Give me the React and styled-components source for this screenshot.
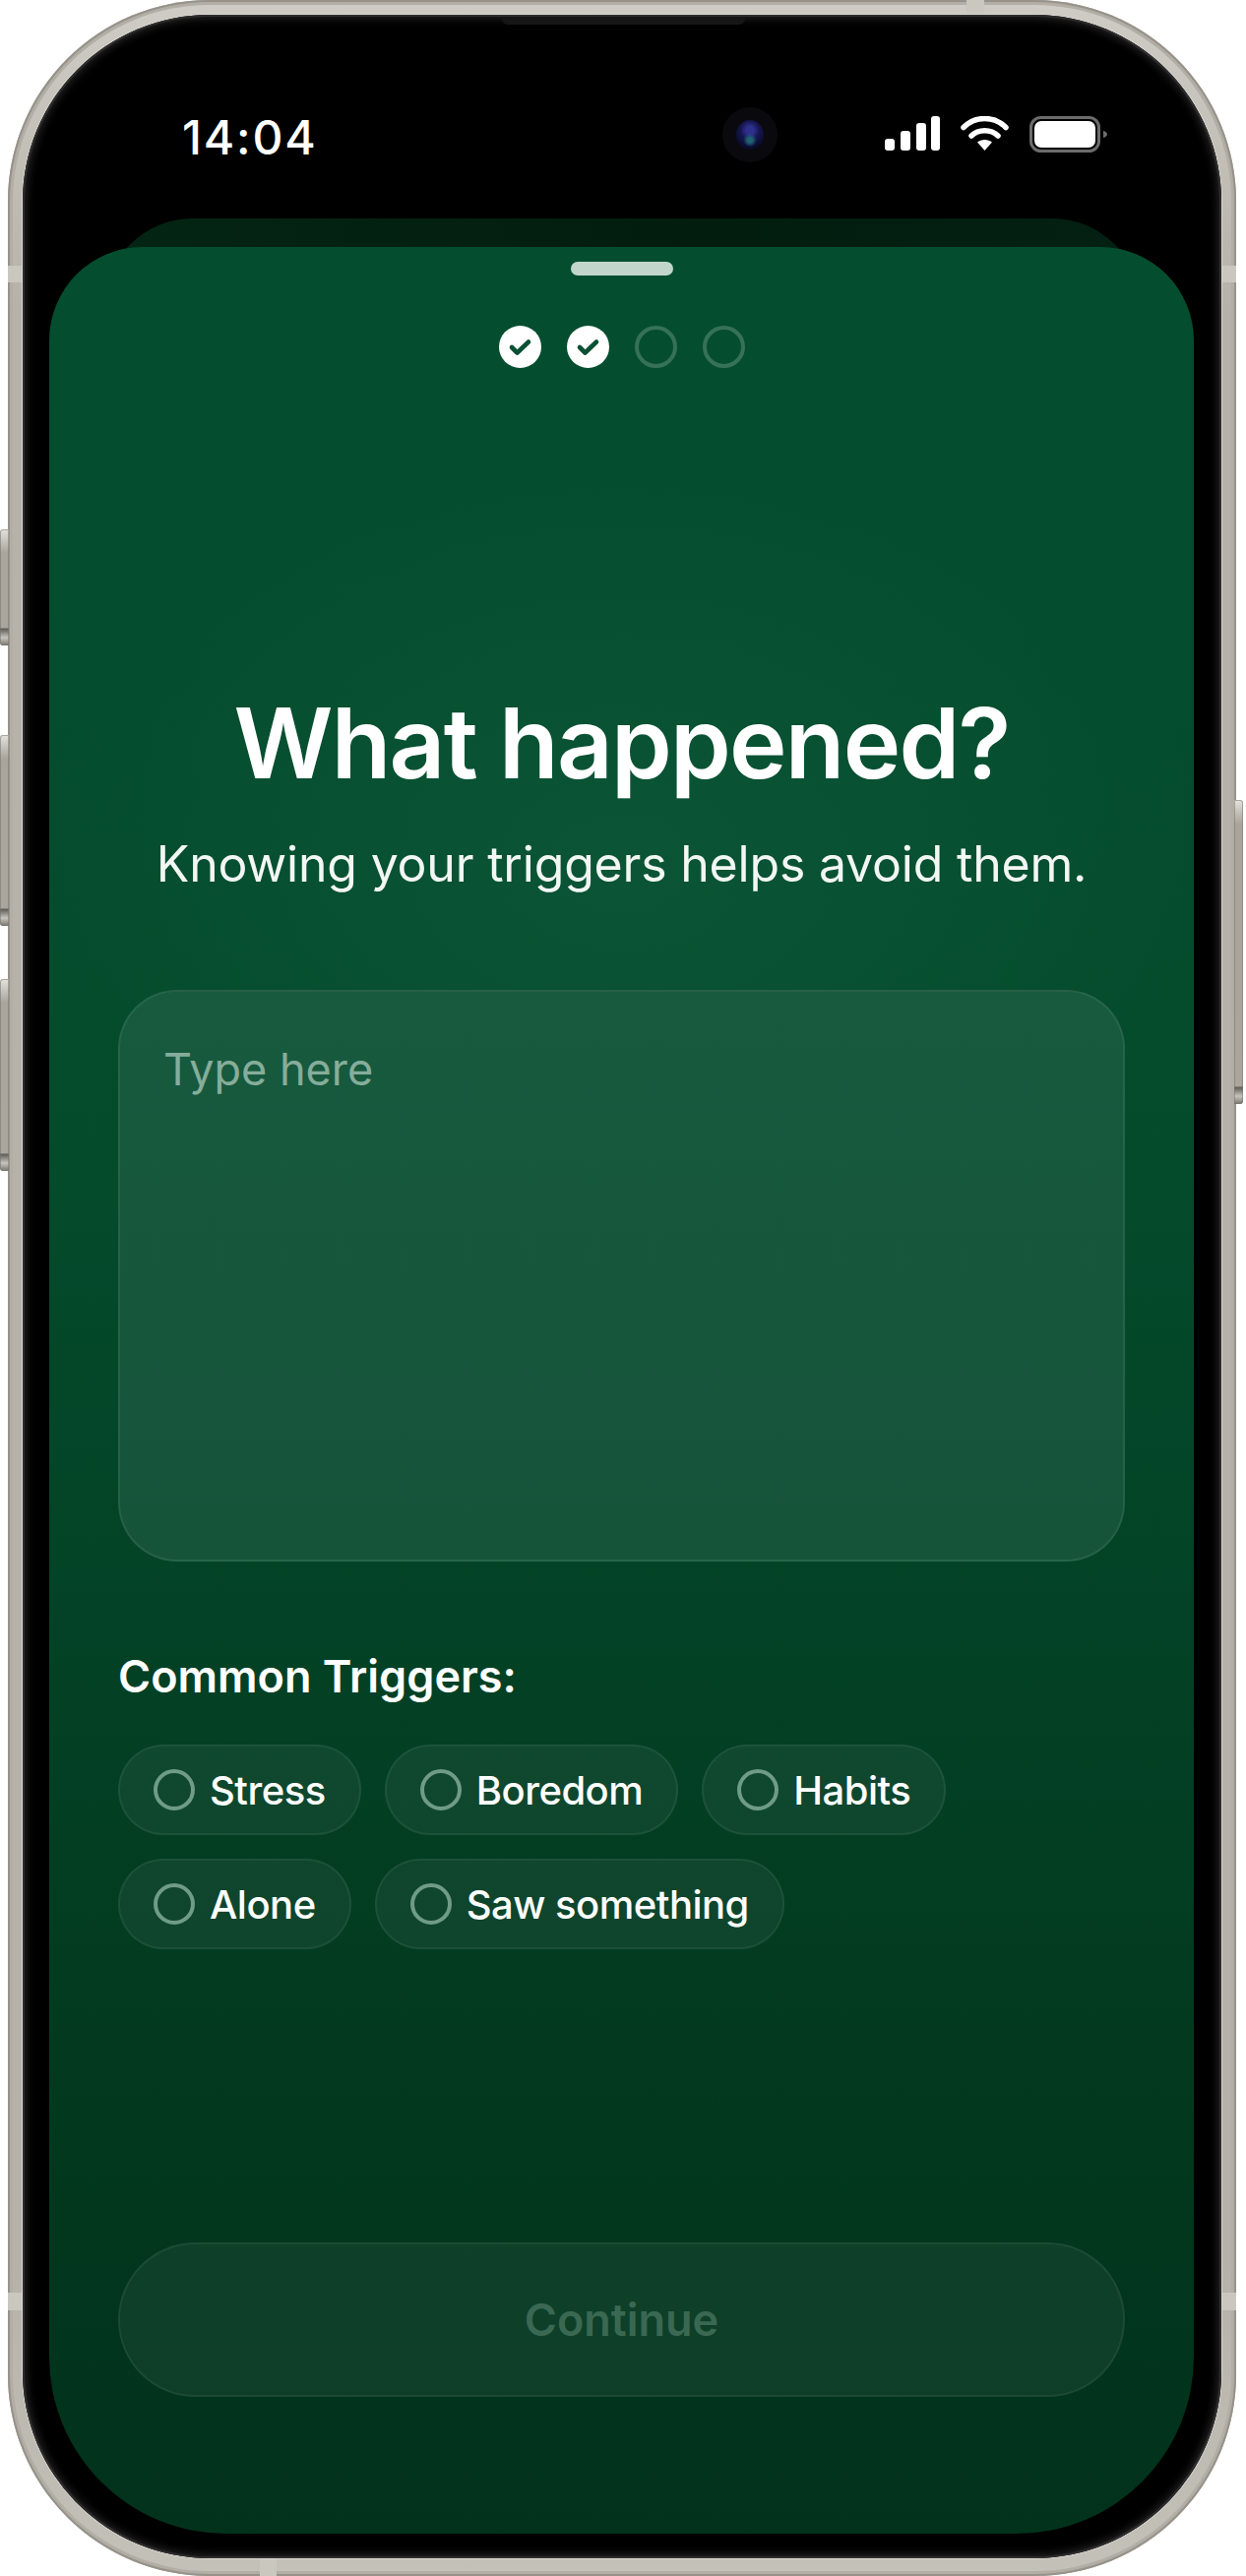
import React from "react"
import styled, { createGlobalStyle } from "styled-components"

const GlobalStyle = createGlobalStyle`
  html, body {
    margin: 0;
    background: #fff;
  }

  body {
    font-family: "Inter", "Liberation Sans", sans-serif;
    color: #fff;
  }
`

const Page = styled.div`
  width: 1266px;
  height: 2618px;
  padding: 0 10px 0 8px;
  box-sizing: border-box;
  overflow: hidden;
`

const Device = styled.div`
  position: relative;
  height: 100%;
  padding: 15px 15px 18px 15px;
  box-sizing: border-box;
  border-radius: 205px;
  background: linear-gradient(180deg, #cfccc5 0%, #b6b2a9 12%, #b6b2a9 88%, #c4c1b9 100%);
  box-shadow: inset 0 0 0 2px #97938b, inset 0 0 0 5px #b2aea5;
`

const SideButton = styled.div`
  position: absolute;
  top: ${p => p.$top}px;
  height: ${p => p.$height}px;
  width: 9px;
  ${p => (p.$right ? "right: -7px;" : "left: -8px;")}
  border-radius: ${p => (p.$right ? "0 3px 3px 0" : "3px 0 0 3px")};
  background: linear-gradient(180deg, #e4e2dd 0, #a9a59c 24px, #aaa69d calc(100% - 18px), #5f5c56 calc(100% - 17px), #c8c5bd calc(100% - 8px), #77746d 100%);
  box-shadow: inset 0 0 0 1px rgba(120, 116, 108, 0.55);
`

const Band = styled.div`
  position: absolute;
  background: #cac7bf;
  ${p => p.$at}
`

const Bezel = styled.div`
  position: relative;
  height: 100%;
  padding: 0 28px 25px 27px;
  box-sizing: border-box;
  display: flex;
  flex-direction: column;
  border-radius: 190px;
  background: #000;
  box-shadow: 0 0 0 1px #dad8d2, inset 0 0 0 2px #2d2d2d, inset 0 0 10px 3px #2a2a2a;
`

const Speaker = styled.div`
  position: absolute;
  top: 2px;
  left: 487px;
  width: 247px;
  height: 8px;
  border-radius: 0 0 6px 6px;
  background: #161616;
`

const StatusBar = styled.div`
  flex: none;
  height: 207px;
  padding-left: 135px;
  display: flex;
  align-items: flex-start;
`

const Time = styled.div`
  width: 136px;
  margin-top: 96px;
  font-size: 48px;
  line-height: 58px;
  font-weight: 500;
  letter-spacing: 1.8px;
  white-space: nowrap;
`

const Camera = styled.div`
  width: 56px;
  height: 56px;
  margin: 94px 109px 0 413px;
  flex: none;
  display: flex;
  align-items: center;
  justify-content: center;
  border-radius: 50%;
  background: #0a0a0e;
`

const Lens = styled.div`
  width: 28px;
  height: 30px;
  border-radius: 50%;
  background: radial-gradient(circle at 50% 68%, #1f6272 0 10%, transparent 28%),
    radial-gradient(circle at 50% 35%, #2f2f8e 0 16%, #15154f 40%, #090b2c 72%, #0e1024 100%);
`

const StatusIcons = styled.div`
  margin-top: 103px;
  display: flex;
  align-items: flex-start;
  gap: 21px;
`

const Peek = styled.div`
  flex: none;
  height: 90px;
  margin: 0 54px 0 56px;
  border-radius: 90px 90px 0 0;
  background: linear-gradient(90deg, #042514 0%, #021d0e 55%, #032012 100%);
`

const Sheet = styled.div`
  position: relative;
  flex: 1;
  margin-top: -61px;
  padding: 15px 70px 139px;
  display: flex;
  flex-direction: column;
  border-radius: 95px 95px 180px 180px;
  background:
    radial-gradient(ellipse 600px 420px at 50% 27%, rgba(40, 120, 88, 0.2), transparent 100%),
    linear-gradient(180deg, #044e2f 0%, #044b2c 40%, #034226 60%, #02391f 80%, #02321c 100%);
`

const Handle = styled.div`
  width: 104px;
  height: 14px;
  margin: 0 auto;
  border-radius: 7px;
  background: #c2d6cc;
`

const Steps = styled.div`
  margin-top: 51px;
  display: flex;
  justify-content: center;
  gap: 26px;
`

const Step = styled.div`
  width: 43px;
  height: 43px;
  box-sizing: border-box;
  border-radius: 50%;
  background: ${p => (p.$done ? "#fff" : "transparent")};
  border: ${p => (p.$done ? "none" : "4px solid rgba(255, 255, 255, 0.2)")};
`

const Title = styled.h1`
  margin: 322px 0 0;
  font-size: 99px;
  line-height: 119px;
  font-weight: 600;
  letter-spacing: -1.75px;
  text-align: center;
`

const Subtitle = styled.p`
  margin: 33px 0 0;
  font-size: 50px;
  line-height: 60px;
  font-weight: 400;
  letter-spacing: -0.2px;
  text-align: center;
  color: #f2f7f4;
`

const TextBox = styled.div`
  height: 581px;
  margin-top: 98px;
  padding: 52px 44px;
  box-sizing: border-box;
  border-radius: 60px;
  border: 2px solid rgba(255, 255, 255, 0.07);
  background: linear-gradient(180deg, #175a3e 0%, #16543a 100%);
  font-size: 45px;
  line-height: 54px;
  color: #86ad9b;
`

const Label = styled.div`
  margin-top: 90px;
  font-size: 45px;
  line-height: 54px;
  font-weight: 600;
`

const Chips = styled.div`
  margin-top: 42px;
  display: flex;
  flex-wrap: wrap;
  gap: 24px;
`

const Chip = styled.div`
  height: 92px;
  padding: 0 34px;
  box-sizing: border-box;
  display: flex;
  align-items: center;
  gap: 15px;
  border-radius: 46px;
  border: 2px solid rgba(255, 255, 255, 0.06);
  background: rgba(255, 255, 255, 0.05);
  font-size: 40px;
  letter-spacing: -0.5px;
  font-weight: 500;
`

const Radio = styled.span`
  width: 42px;
  height: 42px;
  flex: none;
  box-sizing: border-box;
  border-radius: 50%;
  border: 4px solid #6f9b87;
`

const ContinueButton = styled.div`
  height: 157px;
  margin-top: auto;
  box-sizing: border-box;
  display: flex;
  align-items: center;
  justify-content: center;
  border-radius: 79px;
  border: 2px solid rgba(255, 255, 255, 0.06);
  background: rgba(255, 255, 255, 0.05);
  font-size: 45px;
  font-weight: 600;
  color: #3a6852;
`

const SignalIcon = () => (
  <svg width="56" height="35" viewBox="0 0 56 35" fill="#fff">
    <rect x="0" y="23" width="10" height="12" rx="3" />
    <rect x="16" y="15" width="10" height="20" rx="3" />
    <rect x="32" y="7" width="10" height="28" rx="3" />
    <rect x="47" y="0" width="9" height="35" rx="3" />
  </svg>
)

const WifiIcon = () => (
  <svg width="49" height="35" viewBox="0 0 49 35" fill="none" stroke="#fff" strokeWidth="5.5" strokeLinecap="round">
    <path d="M3 11.5C15 -0.5 34 -0.5 46 11.5" />
    <path d="M11 20C18 13 31 13 38 20" />
    <path d="M24.5 35L17 26.5C21 23 28 23 32 26.5Z" fill="#fff" stroke="none" />
  </svg>
)

const BatteryIcon = () => (
  <svg width="79" height="37" viewBox="0 0 79 37" fill="none">
    <rect x="1.5" y="1.5" width="69" height="34" rx="10" stroke="#6c6c6c" strokeWidth="3" />
    <rect x="5" y="5" width="62" height="27" rx="7" fill="#fff" />
    <path d="M75 15C77.5 15.6 79 17 79 18.5C79 20 77.5 21.4 75 22Z" fill="#6c6c6c" />
  </svg>
)

const CheckIcon = () => (
  <svg width="43" height="43" viewBox="0 0 43 43" fill="none" stroke="#0a5034" strokeWidth="4.6" strokeLinecap="round" strokeLinejoin="round">
    <path d="M13 22L18.5 27.5L30 16.5" />
  </svg>
)

const triggers = ["Stress", "Boredom", "Habits", "Alone", "Saw something"]

const App = () => (
  <Page>
    <GlobalStyle />
    <Device>
      <SideButton $top={538} $height={118} />
      <SideButton $top={747} $height={194} />
      <SideButton $top={995} $height={195} />
      <SideButton $right $top={813} $height={309} />
      <Band $at="top: 0; left: 974px; width: 18px; height: 15px;" />
      <Band $at="top: 270px; left: 0; width: 15px; height: 17px;" />
      <Band $at="top: 270px; right: 0; width: 15px; height: 17px;" />
      <Band $at="top: 2330px; left: 0; width: 15px; height: 18px;" />
      <Band $at="top: 2330px; right: 0; width: 15px; height: 18px;" />
      <Band $at="bottom: 0; left: 256px; width: 17px; height: 18px;" />
      <Bezel>
        <Speaker />
        <StatusBar>
          <Time>14:04</Time>
          <Camera>
            <Lens />
          </Camera>
          <StatusIcons>
            <SignalIcon />
            <WifiIcon />
            <BatteryIcon />
          </StatusIcons>
        </StatusBar>
        <Peek />
        <Sheet>
          <Handle />
          <Steps>
            <Step $done>
              <CheckIcon />
            </Step>
            <Step $done>
              <CheckIcon />
            </Step>
            <Step />
            <Step />
          </Steps>
          <Title>What happened?</Title>
          <Subtitle>Knowing your triggers helps avoid them.</Subtitle>
          <TextBox>Type here</TextBox>
          <Label>Common Triggers:</Label>
          <Chips>
            {triggers.map(name => (
              <Chip key={name}>
                <Radio />
                {name}
              </Chip>
            ))}
          </Chips>
          <ContinueButton>Continue</ContinueButton>
        </Sheet>
      </Bezel>
    </Device>
  </Page>
)

export default App
